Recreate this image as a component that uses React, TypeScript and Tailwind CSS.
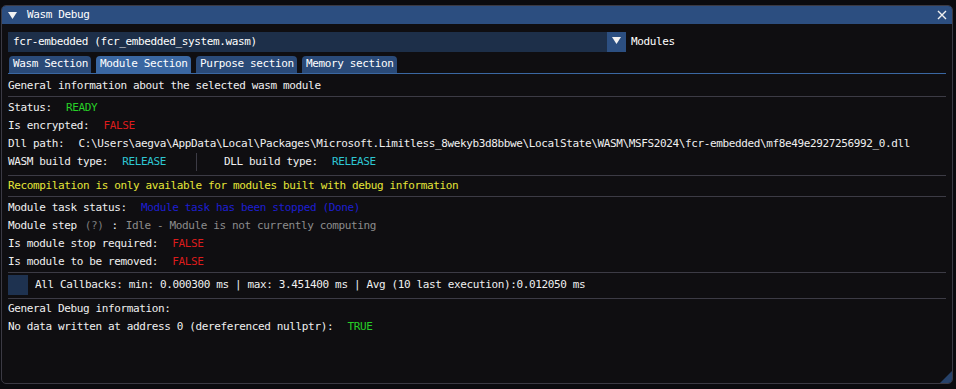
import React from "react";

function Sep() {
  return <div className="h-px bg-[#3c3b45]" />;
}

function Row({ children, className = "" }: { children: React.ReactNode; className?: string }) {
  return <div className={"h-[18px] flex items-center whitespace-pre " + className}>{children}</div>;
}

export default function App() {
  return (
    <div className="w-[956px] h-[389px] bg-[#0b0b0f] pt-[5px] pl-[1px] overflow-hidden font-['DejaVu_Sans_Mono',monospace] text-[11px] tracking-[-0.37px] text-[#f0f0f0]">
      <div className="relative w-[952px] h-[379px] rounded-[5px] border border-[#3b3a44] bg-[#0f0e11] overflow-hidden flex flex-col">
        {/* Title bar */}
        <div className="h-[18px] bg-[#2c4e80] flex items-center pl-[6px] pr-[5px]">
          <svg width="9" height="7" viewBox="0 0 9 7" className="mt-[1px]">
            <polygon points="0,0 9,0 4.5,7" fill="#f2f2f2" />
          </svg>
          <span className="ml-[10px] text-white">Wasm Debug</span>
          <div className="flex-1" />
          <svg width="10" height="10" viewBox="0 0 10 10">
            <path d="M1 1 L9 9 M9 1 L1 9" stroke="#f0f0f0" strokeWidth="1.4" />
          </svg>
        </div>

        <div className="flex flex-col px-[6px]">
          {/* Combo */}
          <div className="mt-[8px] h-[20px] flex items-center">
            <div className="w-[599px] h-full bg-[#1d2f49] flex items-center pl-[5px] text-white">
              fcr-embedded (fcr_embedded_system.wasm)
            </div>
            <div className="w-[19px] h-full bg-[#2c4f81] flex items-center justify-center">
              <svg width="9" height="7" viewBox="0 0 9 7" className="-mt-[3px]">
                <polygon points="0,0 9,0 4.5,7" fill="#f2f2f2" />
              </svg>
            </div>
            <span className="ml-[5px] text-white">Modules</span>
          </div>

          {/* Tabs */}
          <div className="mt-[4px] flex flex-col">
            <div className="flex h-[17px] pl-[1px] gap-[5px]">
              <div className="w-[82px] rounded-t-[4px] bg-[#2a4a78] flex items-center pl-[4px] text-white">Wasm Section</div>
              <div className="w-[95px] rounded-t-[4px] bg-[#3a67a2] flex items-center pl-[4px] text-white">Module Section</div>
              <div className="w-[101px] rounded-t-[4px] bg-[#2a4a78] flex items-center pl-[4px] text-white">Purpose section</div>
              <div className="w-[95px] rounded-t-[4px] bg-[#2a4a78] flex items-center pl-[4px] text-white">Memory section</div>
            </div>
            <div className="h-px bg-[#3a67a2]" />
          </div>

          <Row className="mt-[3px]">General information about the selected wasm module</Row>
          <div className="mt-[1px]"><Sep /></div>

          <Row className="mt-[2px]">
            <span>Status: </span>
            <span className="ml-[8px] text-[#27cf27]">READY</span>
          </Row>
          <Row>
            <span>Is encrypted: </span>
            <span className="ml-[8px] text-[#dc1c1c]">FALSE</span>
          </Row>
          <Row>
            <span>Dll path: </span>
            <span className="ml-[8px]">C:\Users\aegva\AppData\Local\Packages\Microsoft.Limitless_8wekyb3d8bbwe\LocalState\WASM\MSFS2024\fcr-embedded\mf8e49e2927256992_0.dll</span>
          </Row>
          <Row>
            <div className="w-[188px] flex items-center">
              <span>WASM build type: </span>
              <span className="ml-[8px] text-[#2ec6d3]">RELEASE</span>
            </div>
            <div className="w-px h-full bg-[#3c3b45]" />
            <span className="ml-[27px]">DLL build type: </span>
            <span className="ml-[8px] text-[#2ec6d3]">RELEASE</span>
          </Row>

          <div className="mt-[4px]"><Sep /></div>
          <Row className="mt-[1px] text-[#e6e638]">Recompilation is only available for modules built with debug information</Row>
          <div className="mt-[1px]"><Sep /></div>

          <Row className="mt-[2px]">
            <span>Module task status: </span>
            <span className="ml-[8px] text-[#1e1ed2]">Module task has been stopped (Done)</span>
          </Row>
          <Row>
            <span>Module step</span>
            <span className="ml-[8px] text-[#7d7d7d]">(?)</span>
            <span className="ml-[8px]">:</span>
            <span className="ml-[8px] text-[#8c8c8c]">Idle - Module is not currently computing</span>
          </Row>
          <Row>
            <span>Is module stop required: </span>
            <span className="ml-[8px] text-[#dc1c1c]">FALSE</span>
          </Row>
          <Row>
            <span>Is module to be removed: </span>
            <span className="ml-[8px] text-[#dc1c1c]">FALSE</span>
          </Row>

          <div className="mt-[1px]"><Sep /></div>
          <div className="mt-[2px] h-[20px] flex items-center whitespace-pre">
            <div className="w-[20px] h-[20px] bg-[#1e3250]" />
            <span className="ml-[7px]">All Callbacks: min: 0.000300 ms | max: 3.451400 ms | Avg (10 last execution):0.012050 ms</span>
          </div>
          <div className="mt-[3px]"><Sep /></div>

          <Row className="mt-[1px]">General Debug information:</Row>
          <Row>
            <span>No data written at address 0 (dereferenced nullptr): </span>
            <span className="ml-[8px] text-[#27cf27]">TRUE</span>
          </Row>
        </div>

        {/* resize grip */}
        <svg width="12" height="12" viewBox="0 0 12 12" className="absolute right-0 bottom-0">
          <polygon points="12,0 12,12 0,12" fill="#27426a" />
        </svg>
      </div>
    </div>
  );
}
